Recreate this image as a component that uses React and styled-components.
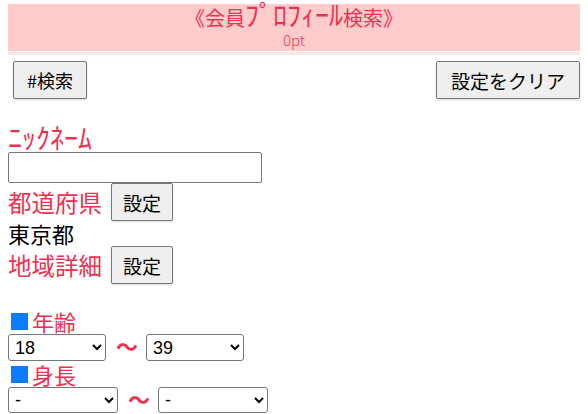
import React from "react";
import styled, { createGlobalStyle } from "styled-components";

const GlobalStyle = createGlobalStyle`
  html, body { margin: 0; padding: 0; background: #fff; }
  body {
    font-family: "Noto Sans CJK JP", "Liberation Sans", sans-serif;
    color: #000;
  }
`;

const RED = "#ee3150";

const Page = styled.div`
  width: 572px;
  padding: 4px 8px 0;
  display: flex;
  flex-direction: column;
`;

const Header = styled.header`
  height: 47px;
  background: #ffcccc;
  border-bottom: 1px solid #fff;
  box-shadow: 0 3px 0 #ffe4e4;
  display: flex;
  flex-direction: column;
  align-items: center;
  color: ${RED};
`;

const Title = styled.div`
  font-size: 20px;
  line-height: 27px;
  height: 27px;
`;

// half-width kana render small in Noto, so they get a bigger size
const Kana = styled.span`
  font-size: ${(p) => p.$size || 28}px;
  line-height: 18px;
`;

const Sub = styled.div`
  font-size: 15px;
  font-weight: 300;
  line-height: 18px;
  height: 18px;
`;

const Toolbar = styled.div`
  display: flex;
  justify-content: space-between;
  margin-top: 9px;
  padding-left: 5px;
`;

const Btn = styled.button`
  height: 38px;
  padding: 0 ${(p) => p.$pad || 11}px;
  font-family: "Noto Sans CJK JP", "Liberation Sans", sans-serif;
  font-size: ${(p) => p.$size || 19}px;
  color: #000;
  background: #efefef;
  border: 1px solid #767676;
  border-radius: 2px;
  box-shadow: 0 1px 2px rgba(0, 0, 0, 0.15);
  cursor: pointer;
`;

const Label = styled.div`
  color: ${RED};
  font-size: ${(p) => p.$size || 22}px;
  line-height: ${(p) => p.$lh || 25}px;
  height: ${(p) => p.$lh || 25}px;
  margin-top: ${(p) => p.$top || 0}px;
`;

const TextInput = styled.input`
  box-sizing: border-box;
  width: 254px;
  height: 31px;
  border: 1px solid #767676;
  border-radius: 2px;
  padding: 0 6px;
  font-size: 18px;
`;

const Row = styled.div`
  display: flex;
  align-items: center;
  gap: 9px;
  height: 38px;
`;

const Value = styled.div`
  font-size: 22px;
  line-height: 25px;
  height: 25px;
`;

const Heading = styled.div`
  display: flex;
  align-items: center;
  height: 25px;
  line-height: 25px;
  margin-top: ${(p) => p.$top || 0}px;
  color: ${RED};
  font-size: 22px;
`;

const Mark = styled.span`
  width: 17px;
  height: 17px;
  background: #0a7cff;
  margin: 0 4px 0 3px;
`;

const SelectRow = styled.div`
  display: flex;
  align-items: center;
  gap: 10px;
  height: ${(p) => p.$h || 27}px;
`;

const Select = styled.select`
  box-sizing: border-box;
  width: ${(p) => p.$w}px;
  height: 100%;
  font-family: "Liberation Sans", Arial, sans-serif;
  font-size: 18px;
  color: #000;
  background: #fff;
  border: 1px solid #767676;
  border-radius: 3px;
  padding: 0 2px;
`;

const Tilde = styled.span`
  color: ${RED};
  font-size: 22px;
  font-weight: bold;
  line-height: 1;
  width: 20px;
  margin-bottom: 5px;
  text-align: center;
`;

const ages = Array.from({ length: 63 }, (_, i) => 18 + i);
const heights = ["-", ...Array.from({ length: 61 }, (_, i) => `${140 + i}cm`)];

const App = () => {
  return (
    <>
      <GlobalStyle />
      <Page>
        <Header>
          <Title>
            《会員<Kana>ﾌﾟﾛﾌｨｰﾙ</Kana>検索》
          </Title>
          <Sub>0pt</Sub>
        </Header>
        <Toolbar>
          <Btn $pad={13} $size={18}>#検索</Btn>
          <Btn $pad={14}>設定をクリア</Btn>
        </Toolbar>

        <Label $top={28}>
          <Kana>ﾆｯｸﾈｰﾑ</Kana>
        </Label>
        <TextInput type="text" />
        <Row>
          <Label $size={23.5}>都道府県</Label>
          <Btn>設定</Btn>
        </Row>
        <Value>東京都</Value>
        <Row>
          <Label $size={23.5}>地域詳細</Label>
          <Btn>設定</Btn>
        </Row>

        <Heading $top={25}>
          <Mark />
          年齢
        </Heading>
        <SelectRow>
          <Select $w={98} defaultValue="18">
            {ages.map((a) => (
              <option key={a} value={a}>{a}</option>
            ))}
          </Select>
          <Tilde>～</Tilde>
          <Select $w={98} defaultValue="39">
            {ages.map((a) => (
              <option key={a} value={a}>{a}</option>
            ))}
          </Select>
        </SelectRow>
        <Heading $top={1}>
          <Mark />
          身長
        </Heading>
        <SelectRow $h={26}>
          <Select $w={110} defaultValue="-">
            {heights.map((h) => (
              <option key={h} value={h}>{h}</option>
            ))}
          </Select>
          <Tilde>～</Tilde>
          <Select $w={110} defaultValue="-">
            {heights.map((h) => (
              <option key={h} value={h}>{h}</option>
            ))}
          </Select>
        </SelectRow>
      </Page>
    </>
  );
};

export default App;
